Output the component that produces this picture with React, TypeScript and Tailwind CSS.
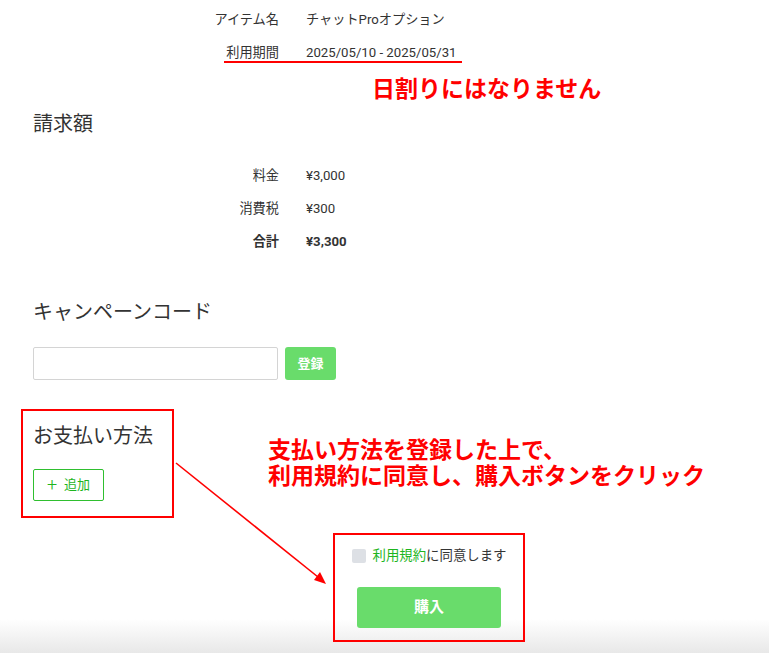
import React from 'react';

const font = { fontFamily: 'Roboto, "Noto Sans CJK JP", sans-serif' };

const summaryRows = [
  { label: 'アイテム名', value: 'チャットProオプション' },
  { label: '利用期間', value: '2025/05/10 - 2025/05/31' },
];

const chargeRows = [
  { label: '料金', value: '¥3,000', bold: false },
  { label: '消費税', value: '¥300', bold: false },
  { label: '合計', value: '¥3,300', bold: true },
];

const InfoRow: React.FC<{ label: string; value: string; bold?: boolean }> = ({ label, value, bold }) => (
  <div className={`grid grid-cols-[246px_1fr] gap-x-[27px] h-[33px] items-center text-[13.2px] text-[#333] ${bold ? 'font-bold' : ''}`}>
    <span className="text-right">{label}</span>
    <span>{value}</span>
  </div>
);

export default function App() {
  return (
    <div className="relative w-full h-[653px] overflow-hidden bg-white" style={font}>
      {/* Footer shade, behind the content */}
      <div className="absolute left-0 right-0 bottom-0 h-[34px] bg-gradient-to-b from-white to-[#e8e8e8]" />

      <div className="relative">
        {/* Order summary */}
        <div className="pl-[33px] pt-[3px]">
          {summaryRows.map((r) => (
            <InfoRow key={r.label} label={r.label} value={r.value} />
          ))}
        </div>

        {/* Charges */}
        <section className="pl-[33px]">
          <h2 className="mt-[41px] text-[20px] leading-[28px] text-[#333]">請求額</h2>
          <div className="mt-[21px]">
            {chargeRows.map((r) => (
              <InfoRow key={r.label} label={r.label} value={r.value} bold={r.bold} />
            ))}
          </div>
        </section>

        {/* Campaign code */}
        <section className="pl-[33px]">
          <h2 className="mt-[40px] text-[20px] leading-[28px] text-[#333]">キャンペーンコード</h2>
          <div className="mt-[21px] flex gap-[7px]">
            <input className="w-[245px] h-[33px] border border-[#d4d4d4] rounded-[2px] px-2 text-[13px] outline-none bg-white" />
            <button className="w-[51px] h-[33px] rounded-[3px] bg-[#69dc6b] text-white text-[13px] font-bold">登録</button>
          </div>
        </section>

        {/* Payment method */}
        <section className="pl-[33px]">
          <h2 className="mt-[42px] text-[20px] leading-[28px] text-[#333]">お支払い方法</h2>
          <button className="mt-[19px] w-[71px] h-[32px] flex items-center justify-center gap-[7px] border border-[#2fbf2f] rounded-[2px] text-[13px] text-[#1eb51e]">
            <span className="text-[18px] leading-none font-light">+</span>
            <span>追加</span>
          </button>
        </section>

        {/* Agreement and purchase */}
        <section className="ml-[329px] w-[200px] flex flex-col items-center">
          <label className="mt-[45px] h-[20px] flex items-center gap-[7px] text-[13.4px] text-[#333]">
            <span className="w-[14px] h-[14px] rounded-[2px] bg-[#dde0e5]" />
            <span>
              <span className="text-[#1eb51e]">利用規約</span>に同意します
            </span>
          </label>
          <button className="mt-[21px] w-[144px] h-[41px] rounded-[3px] bg-[#69dc6b] text-white text-[15px] font-bold">購入</button>
        </section>
      </div>

      {/* Annotations */}
      <div className="absolute left-[224px] top-[61px] w-[238px] h-[2px] bg-[#ff0000]" />
      <div className="absolute left-[372px] top-[76px] text-[23px] leading-[28px] font-bold text-[#ff0000]">日割りにはなりません</div>
      <div className="absolute left-[21px] top-[409px] w-[153px] h-[109px] border-2 border-[#ff0000]" />
      <div className="absolute left-[268px] top-[438px] text-[23px] leading-[26px] font-bold text-[#ff0000]">
        支払い方法を登録した上で、
        <br />
        利用規約に同意し、購入ボタンをクリック
      </div>
      <div className="absolute left-[333px] top-[533px] w-[192px] h-[109px] border-2 border-[#ff0000]" />
      <svg className="absolute left-0 top-0 pointer-events-none" width="769" height="653">
        <line x1="176" y1="463" x2="318" y2="577" stroke="#ff0000" strokeWidth="1.6" />
        <polygon points="326,584 314,580 320,572" fill="#ff0000" />
      </svg>
    </div>
  );
}
